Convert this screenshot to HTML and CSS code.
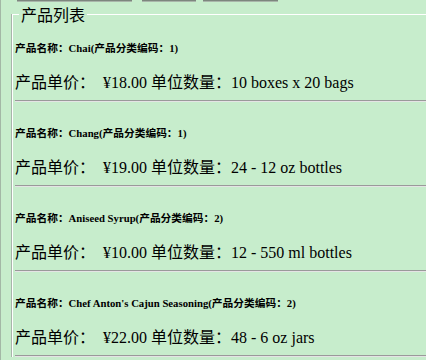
FILE: index.html
```html
<!DOCTYPE html>
<html lang="zh-CN">
<head>
<meta charset="utf-8">
<title>产品列表</title>
<link rel="stylesheet" href="styles.css">
</head>
<body>
<div class="toolbar">
  <span class="btn btn-a"></span>
  <span class="btn btn-b"></span>
  <span class="btn btn-c"></span>
</div>
<div class="page">
  <fieldset class="list">
    <legend class="list-title">产品列表</legend>
    <div class="item">
      <h6 class="item-name">产品名称：Chai(产品分类编码：1)</h6>
      <p class="item-info">产品单价：&nbsp;&nbsp;¥18.00 单位数量：10 boxes x 20 bags</p>
      <hr class="divider">
    </div>
    <div class="item">
      <h6 class="item-name">产品名称：Chang(产品分类编码：1)</h6>
      <p class="item-info">产品单价：&nbsp;&nbsp;¥19.00 单位数量：24 - 12 oz bottles</p>
      <hr class="divider">
    </div>
    <div class="item">
      <h6 class="item-name">产品名称：Aniseed Syrup(产品分类编码：2)</h6>
      <p class="item-info">产品单价：&nbsp;&nbsp;¥10.00 单位数量：12 - 550 ml bottles</p>
      <hr class="divider">
    </div>
    <div class="item">
      <h6 class="item-name">产品名称：Chef Anton's Cajun Seasoning(产品分类编码：2)</h6>
      <p class="item-info">产品单价：&nbsp;&nbsp;¥22.00 单位数量：48 - 6 oz jars</p>
      <hr class="divider">
    </div>
  </fieldset>
</div>
</body>
</html>
```

FILE: styles.css
```css
html, body {
  margin: 0;
  padding: 0;
  background: #c7edcc;
  overflow: hidden;
}
body {
  width: 426px;
  height: 360px;
  box-sizing: border-box;
  border-left: 1px solid #a3b8a6;
  font-family: "Liberation Serif", "Noto Sans CJK SC", serif;
  color: #000;
}
.toolbar {
  display: flex;
  height: 2px;
  padding-left: 16px;
}
.btn {
  display: block;
  height: 2px;
  box-sizing: border-box;
  border-top: 1px solid #7d867e;
  border-bottom: 1px solid #a9b5aa;
}
.btn-a { width: 115px; }
.btn-b { width: 54px; margin-left: 10px; }
.btn-c { width: 75px; margin-left: 7px; }
.page {
  padding-left: 11px;
}
.list {
  margin: 3px 0 0 0;
  padding: 0 0 0 2px;
  border: 0;
  border-top: 1px solid #ffffff;
  border-left: 1px solid #ffffff;
  box-shadow: -1px 0 0 #a8b4aa;
  min-width: 0;
}
.list-title {
  margin-left: 4px;
  padding: 0 2px;
  font-family: "Noto Sans CJK SC", sans-serif;
  font-size: 16px;
  line-height: 18px;
}
.item-name {
  margin: 24px 0 0 0;
  font-size: 10.72px;
  line-height: 14px;
  font-weight: bold;
}
.item:first-of-type .item-name {
  margin-top: 18px;
}
.item-info {
  margin: 18px 0 0 0;
  font-size: 16px;
  line-height: 20px;
}
.divider {
  margin: 7px 0 0 0;
  height: 0;
  border: 0;
  border-top: 1px solid #9a9a9a;
  border-bottom: 1px solid #e4e4e4;
}
```
